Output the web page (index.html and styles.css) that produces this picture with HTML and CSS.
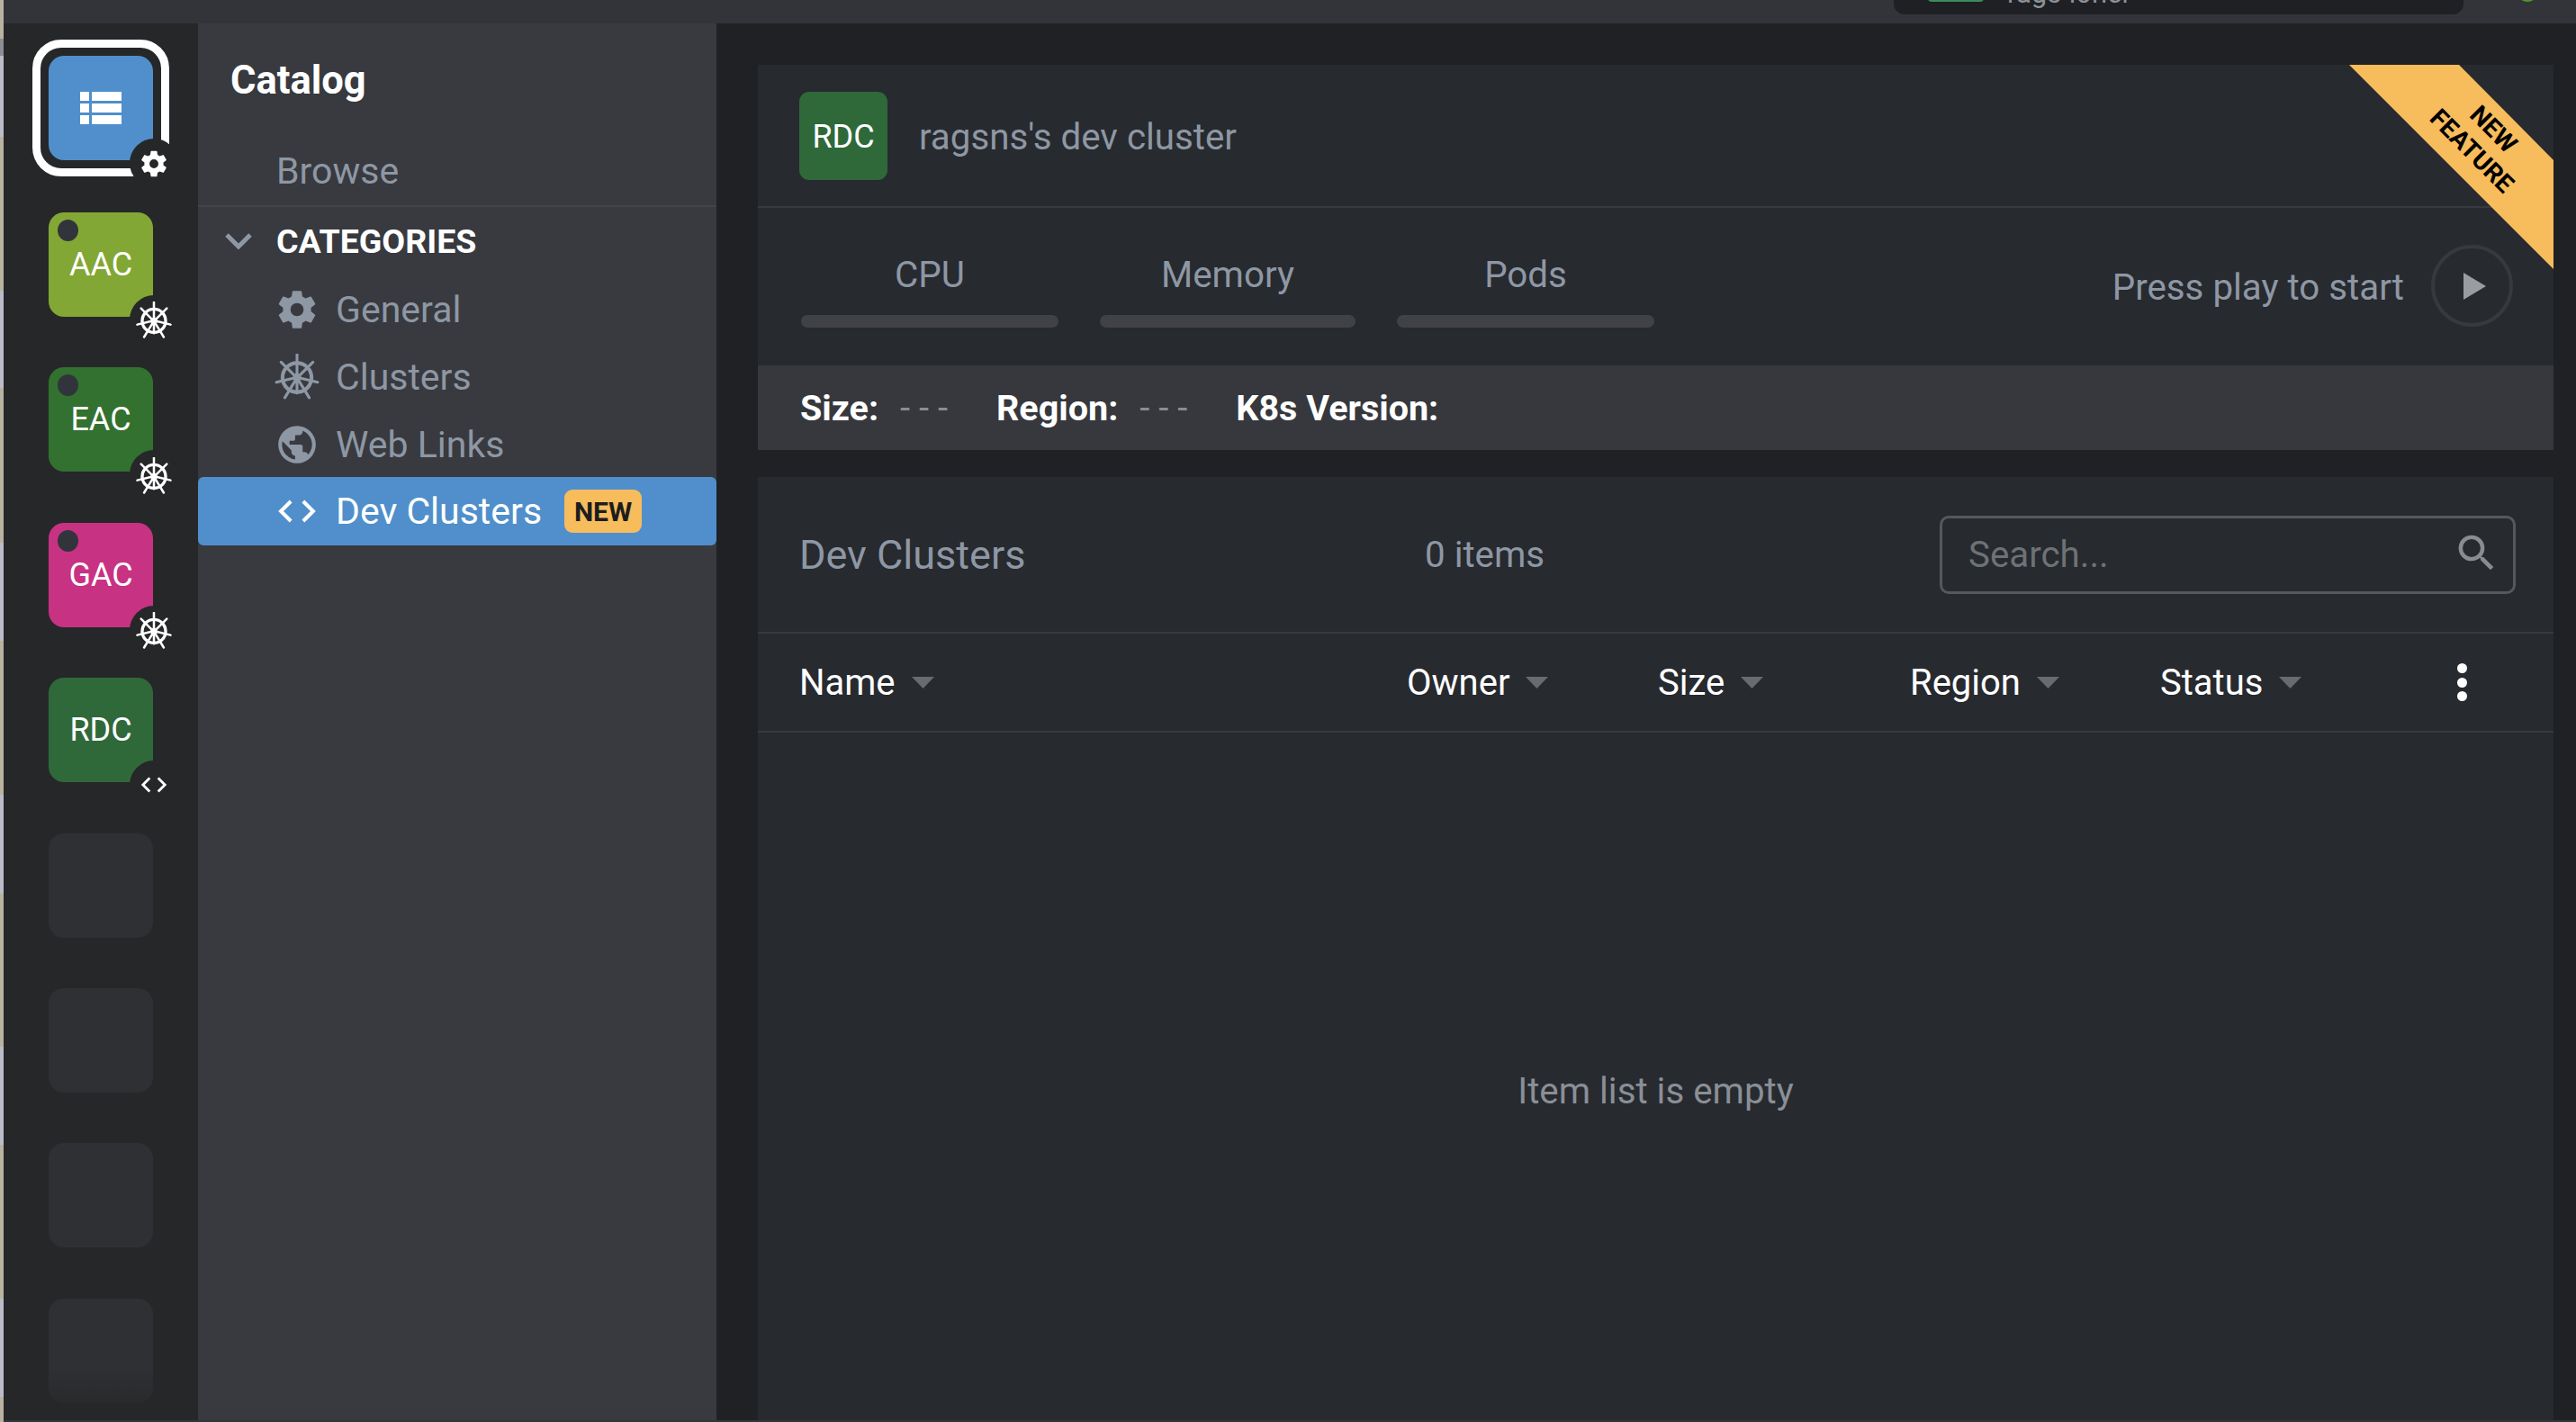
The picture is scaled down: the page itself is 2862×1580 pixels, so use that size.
FILE: index.html
```html
<!DOCTYPE html>
<html lang="en">
<head>
<meta charset="utf-8">
<title>Catalog</title>
<link rel="stylesheet" href="styles.css">
</head>
<body>
<svg class="defs" width="0" height="0" aria-hidden="true">
  <defs>
    <symbol id="helm" viewBox="0 0 50 50">
      <g fill="none" stroke="currentColor" stroke-linecap="round">
        <circle cx="25" cy="25.5" r="15.5" stroke-width="4"/>
        <path stroke-width="3" d="M25 1v21M25 29v13M3 30.5l19-4.5M28 26l19 4.5M8 9l14 14M28 23l14-14M12 47l11-18M27 29l11 18"/>
      </g>
      <circle cx="25" cy="25.5" r="4.5" fill="currentColor"/>
    </symbol>
    <symbol id="gear" viewBox="0 0 24 24">
      <path fill="currentColor" d="M19.43 12.98c.04-.32.07-.64.07-.98s-.03-.66-.07-.98l2.11-1.65a.5.5 0 0 0 .12-.64l-2-3.46a.5.5 0 0 0-.61-.22l-2.49 1a7.3 7.3 0 0 0-1.69-.98l-.38-2.65A.49.49 0 0 0 14 2h-4a.49.49 0 0 0-.49.42l-.38 2.65a7.7 7.7 0 0 0-1.69.98l-2.49-1a.49.49 0 0 0-.61.22l-2 3.46a.49.49 0 0 0 .12.64l2.11 1.65c-.04.32-.07.65-.07.98s.03.66.07.98l-2.11 1.65a.5.5 0 0 0-.12.64l2 3.46c.12.22.39.3.61.22l2.49-1c.52.4 1.08.73 1.69.98l.38 2.65c.03.24.24.42.49.42h4c.25 0 .46-.18.49-.42l.38-2.65a7.7 7.7 0 0 0 1.69-.98l2.49 1c.23.09.49 0 .61-.22l2-3.46a.5.5 0 0 0-.12-.64l-2.11-1.65zM12 15.5a3.5 3.5 0 1 1 0-7 3.5 3.5 0 0 1 0 7z"/>
    </symbol>
    <symbol id="code" viewBox="0 0 24 24">
      <path fill="currentColor" d="M9.4 16.6 4.8 12l4.6-4.6L8 6l-6 6 6 6 1.4-1.4zm5.2 0 4.6-4.6-4.6-4.6L16 6l6 6-6 6-1.4-1.4z"/>
    </symbol>
    <symbol id="caret" viewBox="0 0 25 13">
      <path fill="currentColor" d="M0 0h25L12.5 13z"/>
    </symbol>
  </defs>
</svg>
<div class="desktop">
  <div class="strip"></div>
  <div class="window">
    <header class="topbar">
      <div class="topsearch"><span class="topchip"></span><span class="toptext">rags-ioner</span></div>
      <span class="topdot"></span>
    </header>
    <div class="body">
      <nav class="hotbar">
        <div class="tile-wrap active-frame">
          <div class="tile tile-blue">
            <svg class="list-icon" viewBox="0 0 46 36"><path fill="currentColor" d="M0 0h10v10H0zM13 0h33v10H13zM0 13h10v10H0zM13 13h33v10H13zM0 26h10v10H0zM13 26h33v10H13z"/></svg>
          </div>
          <span class="badge"><svg class="badge-gear"><use href="#gear"/></svg></span>
        </div>
        <div class="tile-wrap">
          <div class="tile tile-lime"><span class="dot"></span>AAC</div>
          <span class="badge"><svg class="badge-helm"><use href="#helm"/></svg></span>
        </div>
        <div class="tile-wrap">
          <div class="tile tile-green"><span class="dot"></span>EAC</div>
          <span class="badge"><svg class="badge-helm"><use href="#helm"/></svg></span>
        </div>
        <div class="tile-wrap">
          <div class="tile tile-pink"><span class="dot"></span>GAC</div>
          <span class="badge"><svg class="badge-helm"><use href="#helm"/></svg></span>
        </div>
        <div class="tile-wrap">
          <div class="tile tile-dev">RDC</div>
          <span class="badge"><svg class="badge-code"><use href="#code"/></svg></span>
        </div>
        <div class="tile-wrap"><div class="tile tile-empty"></div></div>
        <div class="tile-wrap"><div class="tile tile-empty"></div></div>
        <div class="tile-wrap"><div class="tile tile-empty"></div></div>
        <div class="tile-wrap"><div class="tile tile-empty tile-fade"></div></div>
      </nav>
      <aside class="sidebar">
        <h1 class="side-title">Catalog</h1>
        <div class="browse">Browse</div>
        <div class="cat-head">
          <svg class="chev" viewBox="0 0 30 18"><path fill="none" stroke="currentColor" stroke-width="5" d="M2 2l13 13L28 2"/></svg>
          <span>CATEGORIES</span>
        </div>
        <div class="side-item">
          <span class="side-ico"><svg class="ico-44"><use href="#gear"/></svg></span>General
        </div>
        <div class="side-item">
          <span class="side-ico"><svg class="ico-52"><use href="#helm"/></svg></span>Clusters
        </div>
        <div class="side-item">
          <span class="side-ico"><svg class="ico-44" viewBox="0 0 24 24"><path fill="currentColor" d="M12 2a10 10 0 1 0 0 20 10 10 0 0 0 0-20zm-1 17.93A8 8 0 0 1 4 12c0-.62.08-1.21.21-1.79L9 15v1c0 1.1.9 2 2 2v1.93zm6.9-2.54A2 2 0 0 0 16 16h-1v-3c0-.55-.45-1-1-1H8v-2h2c.55 0 1-.45 1-1V7h2c1.1 0 2-.9 2-2v-.41a7.98 7.98 0 0 1 2.9 12.8z"/></svg></span>Web Links
        </div>
        <div class="side-item side-active">
          <span class="side-ico"><svg class="ico-44"><use href="#code"/></svg></span>Dev Clusters<span class="new-badge">NEW</span>
        </div>
      </aside>
      <main class="main">
        <section class="panel-top">
          <div class="ribbon"><span class="ribbon-text">NEW<br>FEATURE</span></div>
          <div class="cluster-head">
            <div class="mini-tile">RDC</div>
            <span class="cluster-name">ragsns's dev cluster</span>
          </div>
          <div class="metrics">
            <div class="metric metric-cpu"><span>CPU</span><i class="bar"></i></div>
            <div class="metric metric-mem"><span>Memory</span><i class="bar"></i></div>
            <div class="metric metric-pods"><span>Pods</span><i class="bar"></i></div>
            <div class="play-group">
              <span class="play-label">Press play to start</span>
              <span class="play"><svg viewBox="0 0 25 30" class="play-tri"><path fill="currentColor" d="M0 0l25 15L0 30z"/></svg></span>
            </div>
          </div>
          <div class="facts">
            <b class="fact-label">Size:</b><span class="fact-dash">- - -</span>
            <b class="fact-label">Region:</b><span class="fact-dash">- - -</span>
            <b class="fact-label">K8s Version:</b>
          </div>
        </section>
        <section class="panel-list">
          <div class="list-head">
            <h2 class="list-title">Dev Clusters</h2>
            <span class="list-count">0 items</span>
            <div class="search">
              <span>Search...</span>
              <svg class="search-ico" viewBox="0 0 24 24"><path fill="currentColor" d="M15.5 14h-.79l-.28-.27A6.47 6.47 0 0 0 16 9.5 6.5 6.5 0 1 0 9.5 16c1.61 0 3.09-.59 4.23-1.57l.27.28v.79l5 4.99L20.49 19l-4.99-5zm-6 0a4.5 4.5 0 1 1 0-9 4.5 4.5 0 0 1 0 9z"/></svg>
            </div>
          </div>
          <div class="table-head">
            <div class="th th-name">Name<svg class="caret"><use href="#caret"/></svg></div>
            <div class="th th-owner">Owner<svg class="caret"><use href="#caret"/></svg></div>
            <div class="th th-size">Size<svg class="caret"><use href="#caret"/></svg></div>
            <div class="th th-region">Region<svg class="caret"><use href="#caret"/></svg></div>
            <div class="th th-status">Status<svg class="caret"><use href="#caret"/></svg></div>
            <div class="kebab"><i></i><i></i><i></i></div>
          </div>
          <div class="empty">Item list is empty</div>
        </section>
      </main>
    </div>
    <footer class="statusbar"></footer>
  </div>
</div>
</body>
</html>
```
FILE: styles.css
```css
* { box-sizing: border-box; }
html, body { margin: 0; height: 100%; }
body { font-family: Roboto, "Noto Sans", sans-serif; background: #1e2024; overflow: hidden; }
.defs { position: absolute; }
.desktop { display: flex; width: 2862px; height: 1580px; }
.strip { width: 4px; flex: none; background: linear-gradient(180deg, #b8b2a0 0 43px, #8f8d94 43px 62px, #bcbbc8 62px 152px, #b8b2a0 152px 323px, #bcbbc8 323px 431px, #b8b2a0 431px 603px, #bcbbc8 603px 712px, #b8b2a0 712px 883px, #bcbbc8 883px 993px, #b8b2a0 993px 1163px, #bcbbc8 1163px 1272px, #b8b2a0 1272px 1443px, #bcbbc8 1443px 1552px, #b8b2a0 1552px 1580px); }
.window { flex: 1; display: flex; flex-direction: column; min-width: 0; }

.topbar { height: 26px; flex: none; background: #32343a; display: flex; justify-content: flex-end; overflow: hidden; position: relative; }
.topsearch { width: 633px; height: 16px; margin-right: 125px; background: #1e2024; border-radius: 0 0 12px 12px; position: relative; overflow: hidden; display: flex; }
.topchip { position: absolute; left: 38px; top: -18px; width: 62px; height: 20px; border-radius: 4px; background: #3d8a5b; }
.toptext { position: absolute; left: 126px; top: -22px; font-size: 31px; line-height: 30px; color: #8d9299; white-space: nowrap; }
.topdot { position: absolute; right: 42px; top: -22px; width: 24px; height: 24px; border-radius: 50%; background: #4c9a2a; }

.body { flex: 1; display: flex; min-height: 0; }

.hotbar { width: 216px; flex: none; background: #262729; display: flex; flex-direction: column; align-items: flex-start; gap: 56.4px; padding: 36px 0 0 50px; overflow: hidden; }
.tile-wrap { position: relative; width: 116px; height: 116px; flex: none; }
.active-frame { margin-bottom: 1.6px; }
.tile { width: 116px; height: 116px; border-radius: 17px; color: #fff; font-size: 36px; display: flex; align-items: center; justify-content: center; position: relative; }
.tile-blue { background: #508fcb; }
.tile-lime { background: #82a735; }
.tile-green { background: #32712f; }
.tile-pink { background: #c73283; }
.tile-dev { background: #2f693a; }
.tile-empty { background: #2f3034; }
.tile-fade { background: linear-gradient(180deg, #2f3034 65%, #282a2c 100%); }
.active-frame::before { content: ""; position: absolute; inset: -18px; border: 9px solid #fff; border-radius: 32px; }
.list-icon { width: 46px; height: 36px; color: #fff; }
.dot { position: absolute; left: 10px; top: 8px; width: 23px; height: 24px; border-radius: 50%; background: #32343c; }
.badge { position: absolute; left: 90px; top: 92px; width: 54px; height: 54px; border-radius: 50%; background: #262729; color: #fff; display: flex; align-items: center; justify-content: center; }
.badge-gear { width: 34px; height: 34px; margin-top: 2px; }
.badge-helm { width: 42px; height: 42px; margin-top: 3px; }
.badge-code { width: 34px; height: 34px; }

.sidebar { width: 576px; flex: none; background: #383a3f; color: #8e97a4; font-size: 41px; }
.side-title { margin: 0; padding: 38px 0 0 36px; height: 114px; font-size: 43.5px; line-height: 52px; font-weight: 700; color: #fff; }
.browse { height: 90px; padding: 25px 0 0 87px; border-bottom: 2px solid #42444a; display: flex; align-items: flex-start; line-height: 50px; }
.cat-head { height: 75px; display: flex; align-items: center; color: #fff; font-weight: 700; font-size: 37.5px; padding-left: 30px; }
.chev { width: 30px; height: 18px; color: #8e97a4; margin-right: 27px; flex: none; }
.side-item { height: 75px; display: flex; align-items: center; padding: 2px 0 0 88px; }
.side-ico { width: 44px; display: flex; justify-content: center; margin-right: 21px; flex: none; }
.ico-44 { width: 50px; height: 50px; flex: none; }
.ico-52 { width: 52px; height: 52px; flex: none; }
.side-active { height: 76px; padding-top: 0; background: #508fcb; color: #fff; border-radius: 6px; }
.new-badge { margin-left: 25px; width: 86px; height: 48px; border-radius: 9px; background: #f7bc5c; color: #1d1d1d; font-weight: 700; font-size: 30px; display: flex; align-items: center; justify-content: center; }

.main { flex: 1; min-width: 0; padding: 46px 25px 0 46px; background: #1f2125; display: flex; flex-direction: column; gap: 30px; }
.panel-top { height: 428px; flex: none; background: #272a2f; position: relative; overflow: hidden; display: flex; flex-direction: column; }
.ribbon { position: absolute; right: 0; top: 0; width: 227px; height: 227px; background: #f7bc5c; clip-path: polygon(0 0, 122px 0, 100% 106px, 100% 100%); }
.ribbon-text { position: absolute; left: 63px; top: 50px; width: 170px; transform: rotate(45deg); text-align: center; font-size: 28px; line-height: 34px; font-weight: 700; color: #000; }
.cluster-head { height: 159px; flex: none; display: flex; align-items: center; padding: 0 0 0 46px; border-bottom: 2px solid #37393e; }
.mini-tile { width: 98px; height: 98px; border-radius: 11px; background: #2f693a; color: #fff; font-size: 36px; padding-top: 2px; display: flex; align-items: center; justify-content: center; flex: none; }
.cluster-name { margin-left: 35px; font-size: 40.3px; padding-top: 3px; color: #8e97a4; }
.metrics { flex: 1; display: flex; align-items: flex-start; padding: 50px 45px 0 48px; color: #8e97a4; font-size: 40.3px; }
.metric { display: flex; flex-direction: column; align-items: center; gap: 19px; }
.metric span { line-height: 50px; }
.metric-cpu { width: 286px; margin-right: 46px; }
.metric-mem { width: 284px; margin-right: 46px; }
.metric-pods { width: 286px; }
.bar { display: block; width: 100%; height: 14px; border-radius: 7px; background: #404247; }
.play-group { margin-left: auto; display: flex; align-items: center; gap: 30px; margin-top: -9px; }
.play-label { padding-top: 4px; }
.play { width: 91px; height: 91px; border-radius: 50%; border: 4px solid #36393d; display: flex; align-items: center; justify-content: center; color: #9a9c9f; }
.play-tri { width: 25px; height: 30px; margin-left: 6px; }
.facts { height: 94px; flex: none; background: #36383d; display: flex; align-items: center; padding-left: 47px; font-size: 39.5px; color: #fff; }
.fact-label { font-weight: 700; }
.fact-dash { color: #8b8d90; margin: 0 54px 0 24px; font-size: 40px; }

.panel-list { flex: 1; min-height: 0; background: #272a2f; display: flex; flex-direction: column; }
.list-head { height: 174px; flex: none; display: flex; align-items: center; padding: 0 42px 0 46px; border-bottom: 2px solid #37393e; position: relative; }
.list-title { margin: 0; width: 695px; font-size: 45px; font-weight: 400; color: #8e97a4; }
.list-count { font-size: 40.3px; color: #8e97a4; }
.search { margin-left: auto; width: 640px; height: 87px; border: 3px solid #55585d; border-radius: 10px; display: flex; align-items: center; justify-content: space-between; padding: 0 14px 0 29px; font-size: 40.3px; color: #6e7275; }
.search-ico { width: 53px; height: 53px; color: #8a8c8f; margin-bottom: 3px; }
.table-head { height: 110px; flex: none; display: flex; align-items: center; padding-left: 46px; border-bottom: 2px solid #37393e; color: #fff; font-size: 40px; position: relative; }
.th { display: flex; align-items: center; }
.th-name { width: 675px; }
.th-owner { width: 279px; }
.th-size { width: 280px; }
.th-region { width: 278px; }
.th-status { width: 330px; }
.caret { width: 25px; height: 13px; margin-left: 18px; color: #696c6f; }
.kebab { display: flex; flex-direction: column; gap: 4.5px; }
.kebab i { display: block; width: 11px; height: 11px; border-radius: 50%; background: #fff; }
.empty { flex: 1; display: flex; justify-content: center; padding-top: 375px; color: #8a8f96; font-size: 40.3px; }
.statusbar { height: 2px; flex: none; background: #33353a; }
```
